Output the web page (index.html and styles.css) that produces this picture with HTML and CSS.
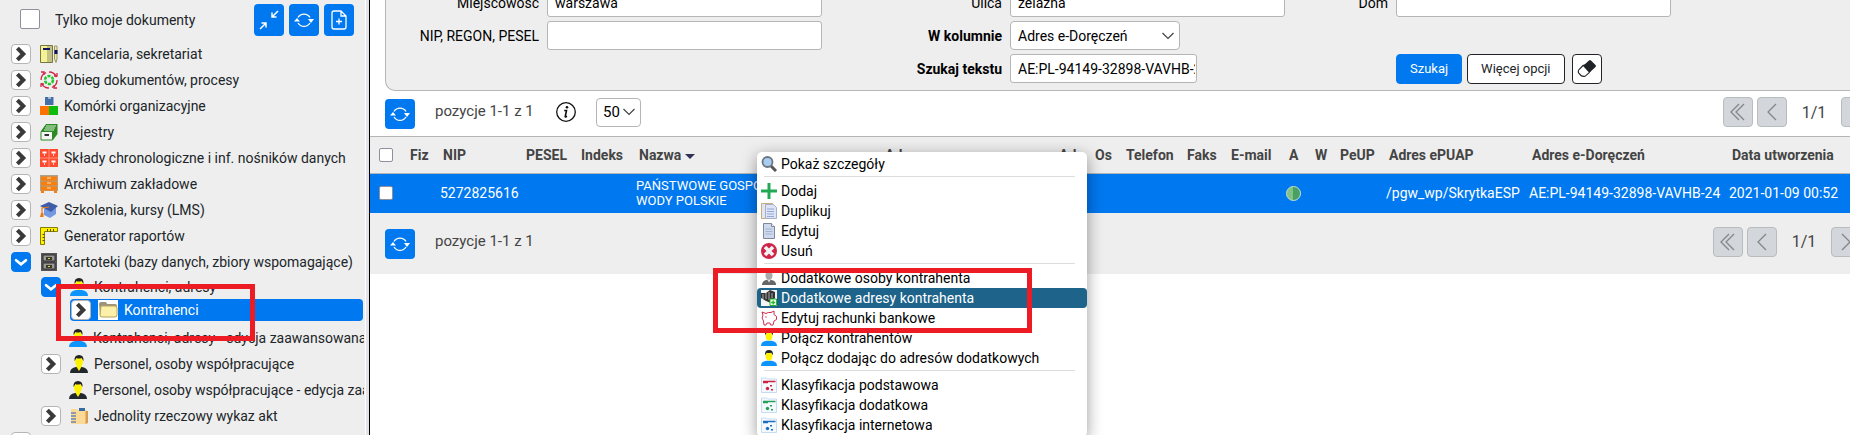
FILE: index.html
```
<!DOCTYPE html>
<html lang="pl">
<head>
  <meta charset="UTF-8">
  <title>Kontrahenci</title>
  <link rel="stylesheet" href="styles.css">
</head>
<body>
  <svg class="sprite" aria-hidden="true">
    <symbol id="i-right" viewBox="0 0 20 20"><path d="M6 3.500l6.500 6.500L6 16.500" fill="none" stroke="#3a3a3a" stroke-width="4.500"/></symbol>
    <symbol id="i-down" viewBox="0 0 20 20"><path d="M4.500 8l5.500 4.500 5.500-4.500" fill="none" stroke="#fff" stroke-width="3" stroke-linecap="round"/></symbol>
    <symbol id="i-refresh" viewBox="0 0 20 20">
      <path d="M4 7.500a7 7 0 0 1 12 0M17 10.500a7 7 0 0 0-.2-1M16 13a7 7 0 0 1-12 0M3 10.500a7 7 0 0 1 .2-1" fill="none" stroke="#fff" stroke-width="1.300"/>
      <path d="M14 9h6l-3 4zM0 11.500h6L3 8z" fill="#fff"/>
    </symbol>
    <symbol id="i-collapse" viewBox="0 0 20 20"><path d="M19 1l-6 6M13 2.500V7h4.500M1 19l6-6M2.500 13H7v4.500" fill="none" stroke="#fff" stroke-width="1.500"/></symbol>
    <symbol id="i-newdoc" viewBox="0 0 20 20">
      <path d="M12 1H5a2 2 0 0 0-2 2v14a2 2 0 0 0 2 2h10a2 2 0 0 0 2-2V6zM12 1v5h5M10 8.500v6M7 11.500h6" fill="none" stroke="#fff" stroke-width="1.300"/>
    </symbol>
    <symbol id="i-binder" viewBox="0 0 18 18">
      <path d="M.5.500h12v17H.5z" fill="#f5f296" stroke="#77773f"/><path d="M7 1h5v16H7z" fill="#c3c086"/><path d="M3 3h7v2H3z" fill="#101060"/>
      <path d="M14.500 1h2.500v13l-1 3.500-1.500-3.500z" fill="#eee9a0" stroke="#99966a"/><path d="M14.500 5h3v4h-3z" fill="#101060"/>
    </symbol>
    <symbol id="i-cycle" viewBox="0 0 18 18">
      <circle cx="9" cy="9" r="8" fill="none" stroke="#d42545" stroke-width="1.300" stroke-dasharray="9.500 3"/>
      <path d="M1 1h3v3M17 2v3h-3M17 17h-3v-3M1 16v-3h3" fill="none" stroke="#d42545" stroke-width="1.300"/>
      <circle cx="9" cy="9" r="4" fill="none" stroke="#21c82d" stroke-width="2.500" stroke-dasharray="3 1.200"/>
    </symbol>
    <symbol id="i-blocks" viewBox="0 0 18 18"><path d="M5 0h8.500v8H5z" fill="#4470a8"/><path d="M8 0h3v2H8z" fill="#9fb6d4"/><path d="M0 9h9v9H0z" fill="#ff7200"/><path d="M9 9h9v9H9z" fill="#0cbd0c"/></symbol>
    <symbol id="i-registers" viewBox="0 0 18 18">
      <path d="M1 8L6 1h11.500v10L13 17H1z" fill="#2c8a24"/><path d="M6 3h10M5 5h10M4 7h10" stroke="#d8efd4" stroke-width="1.100"/>
      <path d="M1 8.500h11.500v8.500H1z" fill="#f5f5f5" stroke="#2c8a24"/><path d="M4.500 11h4.500v2H4.500z" fill="#333"/>
    </symbol>
    <symbol id="i-stores" viewBox="0 0 18 18"><path d="M0 0h18v18H0z" fill="#ff4a2e"/><path d="M9 0v18M0 9h18" stroke="#ff8d7a"/><path d="M2.500 2.500h4v2h-4zM11.500 2.500h4v2h-4zM2.500 11.500h4v2h-4zM11.500 11.500h4v2h-4z" fill="#fff"/><path d="M4 5h1v2H4zM13 5h1v2h-1zM4 14h1v2H4zM13 14h1v2h-1z" fill="#ffd8d0"/></symbol>
    <symbol id="i-archive" viewBox="0 0 18 18"><path d="M0 0h18v16H0z" fill="#aaa18e"/><path d="M1 1.500h16v4H1zM1 6.500h16v4H1zM1 11.500h16v4H1zM1 16h3v2H1zM14 16h3v2h-3z" fill="#fb7d0a"/><path d="M7 3h4M7 8h4M7 13h4" stroke="#ffe0b8"/></symbol>
    <symbol id="i-course" viewBox="0 0 18 18"><path d="M4 8v6l6 3 6-4V7z" fill="#7399e2"/><path d="M0 5l9-4 9 4-7 6z" fill="#3e5da8"/><path d="M9 6L2 7v5" fill="none" stroke="#e5791a" stroke-width="1.200"/><path d="M1 12h2.500v4H0z" fill="#e5791a"/></symbol>
    <symbol id="i-ruler" viewBox="0 0 18 18"><path d="M.5.500h17v4h-13v13h-4z" fill="#fff200" stroke="#877e00"/><path d="M7.500 2v2.500M10.500 2v2.500M13.500 2v2.500M2.500 7.500h2M2.500 10.500h2M2.500 13.500h2" stroke="#55500a"/></symbol>
    <symbol id="i-cabinet" viewBox="0 0 18 18"><path d="M1 0h16v18H1z" fill="#555"/><path d="M3 2h12v6H3zM3 10h12v6H3z" fill="#999" stroke="#333"/><path d="M6 4h6v3H6zM6 12h6v3H6z" fill="#3b3b20"/><path d="M8 5h2v1H8zM8 13h2v1H8z" fill="#e0d070"/></symbol>
    <symbol id="i-person" viewBox="0 0 18 18"><path d="M0 18q0-5 6-6h6q6 1 6 6z" fill="#0d94ff"/><path d="M5 5q0 7 4 7t4-7l-2-2H7z" fill="#fff200"/><path d="M4.500 6Q4 0 9 0t4.500 6l-2-3q-3 1-5 0z" fill="#222"/></symbol>
    <symbol id="i-staff" viewBox="0 0 18 18"><path d="M0 18q0-5 6-6h6q6 1 6 6z" fill="#20282e"/><path d="M6 11l3 5 3-5z" fill="#fff200"/><path d="M5 5q0 7 4 7t4-7l-2-2H7z" fill="#fff200"/><path d="M4.500 6Q4 0 9 0t4.500 6l-2-3q-3 1-5 0z" fill="#222"/></symbol>
    <symbol id="i-user" viewBox="0 0 18 18"><path d="M1 17q0-5 6-6h4q6 1 6 6z" fill="#666"/><ellipse cx="9" cy="6" rx="4" ry="5.500" fill="#aaa"/><path d="M7 11l2 3 2-3z" fill="#ddd"/></symbol>
    <symbol id="i-folder" viewBox="0 0 20 20"><path d="M1 4q0-2 2-2h4q2 0 2 2h8q2 0 2 2v9q0 2-2 2H4q-2 0-2-2z" fill="#9d937c"/><path d="M3 6h14q2 0 2 2v7q0 2-2 2H4q-2 0-2-2z" fill="#fdf0a8" stroke="#b6a25a"/></symbol>
    <symbol id="i-index" viewBox="0 0 18 18"><path d="M1 2h6l1 1h9v14H1z" fill="#fbd997"/><path d="M15.500 4H18v12l-2.500 1z" fill="#d99c4e"/><path d="M9 1h6v3H9z" fill="#366aa5"/><path d="M1 6h5M1 9h5M1 12h5M1 15h5" stroke="#6c87ad" stroke-width="1.600"/></symbol>
    <symbol id="i-search" viewBox="0 0 16 16"><path d="M10 10l5 5" stroke="#555" stroke-width="3"/><circle cx="6.500" cy="6" r="5" fill="#a9cdf2" stroke="#6c7580" stroke-width="1.800"/></symbol>
    <symbol id="i-plus" viewBox="0 0 16 16"><path d="M8 0v16M0 8h16" stroke="#23a955" stroke-width="3"/></symbol>
    <symbol id="i-copy" viewBox="0 0 16 16"><path d="M.5.500h11v15H.5z" fill="#e3e6ee" stroke="#c9ab7c"/><path d="M4.500 1.500h8l3 3v11h-11z" fill="#dbe5f7" stroke="#a8afc4"/><path d="M6 6h7M6 8.500h7M6 11h7M6 13.500h7" stroke="#96a9d2"/></symbol>
    <symbol id="i-doc" viewBox="0 0 16 16"><path d="M2.500.500h8l3 3v12h-11z" fill="#cdd9ef" stroke="#7f8798"/><path d="M10.500.500v3h3" fill="#fff" stroke="#7f8798"/><path d="M4.500 6h7M4.500 8.500h7M4.500 11h7" stroke="#a5b3ce"/></symbol>
    <symbol id="i-delete" viewBox="0 0 16 16"><circle cx="8" cy="8" r="8" fill="#d0254a"/><path d="M4 4l8 8M12 4l-8 8" stroke="#f3f3f3" stroke-width="3.600"/></symbol>
    <symbol id="i-address" viewBox="0 0 16 16"><path d="M0 0h16v16H0z" fill="#f4f4f4"/><path d="M0 3h5l4-3 5 2v6l-4 5-5-2-5-3z" fill="#333"/><path d="M2 4v5M5 3v6M8 2v8M11 3v5" stroke="#aaa"/><path d="M9 9h6.500v6.500H9z" fill="#eaffea" stroke="#22b52b"/><path d="M12.200 10.500v4M10.200 12.500h4" stroke="#22b52b" stroke-width="1.300"/></symbol>
    <symbol id="i-piggy" viewBox="0 0 16 16"><path d="M1 2l4 1.500q2-1.500 5-1l3-1.500v3.500l2.500 2v3L13 11l-1 4H9.500L9 13H6l-1 2H3l-.5-4Q0 8 2 5z" fill="#fff" stroke="#cf2c50"/><circle cx="5" cy="7" r=".7" fill="#cf2c50"/></symbol>
    <symbol id="i-class" viewBox="0 0 16 16"><path d="M.5 1h5l1 1h9v13.500H.5z" fill="#f4f9fe" stroke="#c5dcf2"/><path d="M2 4.500h12.500" stroke="currentColor" stroke-width="1.500"/><path d="M2 5.500h5" stroke="currentColor" stroke-width="1.500"/><circle cx="6.500" cy="11.500" r="1.700" fill="currentColor"/><path d="M9 8h2v1.500H9zM10 12h2v1.500h-2z" fill="currentColor"/></symbol>
    <symbol id="i-info" viewBox="0 0 20 20"><circle cx="10" cy="10" r="9.300" fill="none" stroke="#111" stroke-width="1.300"/><circle cx="11" cy="5.300" r="1.300" fill="#111"/><path d="M8.200 8.500h2.300l-1.300 6q0 .8 1.800-.2" fill="none" stroke="#111" stroke-width="1.600"/></symbol>
    <symbol id="i-eraser" viewBox="0 0 20 20"><path d="M7 6l5-4.500q1-1 2 0l4.500 4.500q1 1 0 2L12 14z" fill="#1f2226"/><path d="M6.500 6L2 10.500q-1.500 2 0 4L4 16.500q1 1 4 .8l4.500-4" fill="#fff" stroke="#1f2226" stroke-width="1.100"/><path d="M6.500 6l6.500 7" stroke="#1f2226" stroke-width="2"/></symbol>
    <symbol id="i-first" viewBox="0 0 20 20"><path d="M11 2l-8 8 8 8M16 2l-8 8 8 8" fill="none" stroke="#83878b" stroke-width="1.300"/></symbol>
    <symbol id="i-prev" viewBox="0 0 20 20"><path d="M14 2l-8 8 8 8" fill="none" stroke="#83878b" stroke-width="1.300"/></symbol>
    <symbol id="i-next" viewBox="0 0 20 20"><path d="M6 2l8 8-8 8" fill="none" stroke="#83878b" stroke-width="1.300"/></symbol>
  </svg>

  <aside class="sidebar">
    <div class="sidebar-top">
      <input type="checkbox" id="onlyMine">
      <label for="onlyMine">Tylko moje dokumenty</label>
      <button class="btn-icon tall" aria-label="Zwiń"><svg><use href="#i-collapse"/></svg></button>
      <button class="btn-icon tall" aria-label="Odśwież"><svg><use href="#i-refresh"/></svg></button>
      <button class="btn-icon tall" aria-label="Nowy dokument"><svg><use href="#i-newdoc"/></svg></button>
    </div>
    <ul class="tree">
      <li><button class="toggle" aria-label="Rozwiń"><svg><use href="#i-right"/></svg></button><svg class="ico"><use href="#i-binder"/></svg><a href="#">Kancelaria, sekretariat</a></li>
      <li><button class="toggle" aria-label="Rozwiń"><svg><use href="#i-right"/></svg></button><svg class="ico"><use href="#i-cycle"/></svg><a href="#">Obieg dokumentów, procesy</a></li>
      <li><button class="toggle" aria-label="Rozwiń"><svg><use href="#i-right"/></svg></button><svg class="ico"><use href="#i-blocks"/></svg><a href="#">Komórki organizacyjne</a></li>
      <li><button class="toggle" aria-label="Rozwiń"><svg><use href="#i-right"/></svg></button><svg class="ico"><use href="#i-registers"/></svg><a href="#">Rejestry</a></li>
      <li><button class="toggle" aria-label="Rozwiń"><svg><use href="#i-right"/></svg></button><svg class="ico"><use href="#i-stores"/></svg><a href="#">Składy chronologiczne i inf. nośników danych</a></li>
      <li><button class="toggle" aria-label="Rozwiń"><svg><use href="#i-right"/></svg></button><svg class="ico"><use href="#i-archive"/></svg><a href="#">Archiwum zakładowe</a></li>
      <li><button class="toggle" aria-label="Rozwiń"><svg><use href="#i-right"/></svg></button><svg class="ico"><use href="#i-course"/></svg><a href="#">Szkolenia, kursy (LMS)</a></li>
      <li><button class="toggle" aria-label="Rozwiń"><svg><use href="#i-right"/></svg></button><svg class="ico"><use href="#i-ruler"/></svg><a href="#">Generator raportów</a></li>
      <li><button class="toggle open" aria-label="Zwiń"><svg><use href="#i-down"/></svg></button><svg class="ico"><use href="#i-cabinet"/></svg><a href="#">Kartoteki (bazy danych, zbiory wspomagające)</a></li>
      <li class="level2 short"><button class="toggle open" aria-label="Zwiń"><svg><use href="#i-down"/></svg></button><svg class="ico"><use href="#i-person"/></svg><a href="#">Kontrahenci, adresy</a></li>
      <li class="selected"><button class="toggle" aria-label="Rozwiń"><svg><use href="#i-right"/></svg></button><svg class="ico"><use href="#i-folder"/></svg><a href="#">Kontrahenci</a></li>
      <li class="level2 leaf"><svg class="ico"><use href="#i-person"/></svg><a href="#">Kontrahenci, adresy - edycja zaawansowana</a></li>
      <li class="level2"><button class="toggle" aria-label="Rozwiń"><svg><use href="#i-right"/></svg></button><svg class="ico"><use href="#i-staff"/></svg><a href="#">Personel, osoby współpracujące</a></li>
      <li class="level2 leaf"><svg class="ico"><use href="#i-staff"/></svg><a href="#">Personel, osoby współpracujące - edycja zaawansowana</a></li>
      <li class="level2"><button class="toggle" aria-label="Rozwiń"><svg><use href="#i-right"/></svg></button><svg class="ico"><use href="#i-index"/></svg><a href="#">Jednolity rzeczowy wykaz akt</a></li>
      <li><button class="toggle" aria-label="Rozwiń"><svg><use href="#i-right"/></svg></button></li>
    </ul>
  </aside>

  <main class="content">
    <form class="search">
      <label for="city">Miejscowość</label>
      <input type="text" id="city" value="warszawa">
      <label for="street">Ulica</label>
      <input type="text" id="street" value="żelazna">
      <label for="house">Dom</label>
      <input type="text" id="house">

      <label for="nip">NIP, REGON, PESEL</label>
      <input type="text" id="nip">
      <label class="bold" for="column">W kolumnie</label>
      <select id="column" class="column-select"><option>Adres e-Doręczeń</option></select>

      <label class="bold text-label" for="text">Szukaj tekstu</label>
      <input type="text" id="text" class="text-input" value="AE:PL-94149-32898-VAVHB-24">
      <div class="actions">
        <button type="button" class="btn primary">Szukaj</button>
        <button type="button" class="btn">Więcej opcji</button>
        <button type="button" class="btn square" aria-label="Wyczyść"><svg><use href="#i-eraser"/></svg></button>
      </div>
    </form>

    <div class="list-bar">
      <button class="btn-icon" aria-label="Odśwież"><svg><use href="#i-refresh"/></svg></button>
      <span class="count">pozycje 1-1 z 1</span>
      <svg class="info"><use href="#i-info"/></svg>
      <select class="page-size" aria-label="Liczba pozycji"><option>50</option></select>
      <div class="pager">
        <button aria-label="Pierwsza"><svg><use href="#i-first"/></svg></button>
        <button aria-label="Poprzednia"><svg><use href="#i-prev"/></svg></button>
        <span>1/1</span>
        <button aria-label="Następna"><svg><use href="#i-next"/></svg></button>
      </div>
    </div>

    <table class="grid">
      <colgroup>
        <col class="c-check"><col class="c-fiz"><col class="c-nip"><col class="c-pesel"><col class="c-index"><col class="c-name">
        <col class="c-address"><col class="c-ad"><col class="c-os"><col class="c-phone"><col class="c-fax"><col class="c-mail">
        <col class="c-a"><col class="c-w"><col class="c-peup"><col class="c-epuap"><col class="c-edor"><col class="c-date">
      </colgroup>
      <thead>
        <tr>
          <th><input type="checkbox" aria-label="Zaznacz wszystkie"></th>
          <th>Fiz</th><th>NIP</th><th>PESEL</th><th>Indeks</th><th>Nazwa <span class="sort"></span></th>
          <th>Adres</th><th>Ad</th><th>Os</th><th>Telefon</th><th>Faks</th><th>E-mail</th>
          <th>A</th><th>W</th><th>PeUP</th><th>Adres ePUAP</th><th>Adres e-Doręczeń</th><th>Data utworzenia</th>
        </tr>
      </thead>
      <tbody>
        <tr>
          <td><input type="checkbox" aria-label="Zaznacz wiersz"></td>
          <td></td><td>5272825616</td><td></td><td></td><td class="name">PAŃSTWOWE GOSPODARSTWO<br>WODY POLSKIE</td>
          <td></td><td></td><td></td><td></td><td></td><td></td>
          <td><span class="status"></span></td><td></td><td></td><td>/pgw_wp/SkrytkaESP</td><td>AE:PL-94149-32898-VAVHB-24</td><td>2021-01-09 00:52</td>
        </tr>
      </tbody>
    </table>

    <div class="list-bar bottom">
      <button class="btn-icon" aria-label="Odśwież"><svg><use href="#i-refresh"/></svg></button>
      <span class="count">pozycje 1-1 z 1</span>
      <div class="pager">
        <button aria-label="Pierwsza"><svg><use href="#i-first"/></svg></button>
        <button aria-label="Poprzednia"><svg><use href="#i-prev"/></svg></button>
        <span>1/1</span>
        <button aria-label="Następna"><svg><use href="#i-next"/></svg></button>
      </div>
    </div>
  </main>

  <div class="context-menu" role="menu">
    <button role="menuitem"><svg><use href="#i-search"/></svg>Pokaż szczegóły</button>
    <hr>
    <button role="menuitem"><svg><use href="#i-plus"/></svg>Dodaj</button>
    <button role="menuitem"><svg><use href="#i-copy"/></svg>Duplikuj</button>
    <button role="menuitem"><svg><use href="#i-doc"/></svg>Edytuj</button>
    <button role="menuitem"><svg><use href="#i-delete"/></svg>Usuń</button>
    <hr>
    <button role="menuitem"><svg><use href="#i-user"/></svg>Dodatkowe osoby kontrahenta</button>
    <button role="menuitem" class="active"><svg><use href="#i-address"/></svg>Dodatkowe adresy kontrahenta</button>
    <button role="menuitem"><svg><use href="#i-piggy"/></svg>Edytuj rachunki bankowe</button>
    <button role="menuitem"><svg><use href="#i-person"/></svg>Połącz kontrahentów</button>
    <button role="menuitem"><svg><use href="#i-person"/></svg>Połącz dodając do adresów dodatkowych</button>
    <hr>
    <button role="menuitem"><svg class="red"><use href="#i-class"/></svg>Klasyfikacja podstawowa</button>
    <button role="menuitem"><svg class="green"><use href="#i-class"/></svg>Klasyfikacja dodatkowa</button>
    <button role="menuitem"><svg class="blue"><use href="#i-class"/></svg>Klasyfikacja internetowa</button>
  </div>

  <div class="marker marker-tree"></div>
  <div class="marker marker-menu"></div>
</body>
</html>
```
FILE: styles.css
```
:root {
  --primary: #0078f0;
  --panel: #eee;
  --line: #b5b5b5;
  --text: #212529;
}

* {
  box-sizing: border-box;
}

body {
  margin: 0;
  height: 100vh;
  display: flex;
  overflow: hidden;
  position: relative;
  background: white;
  color: var(--text);
  font-family: Roboto, "Noto Sans", sans-serif;
  font-size: 14px;
}

button,
input,
select {
  font-family: inherit;
  font-size: 14px;
  margin: 0;
}

button {
  padding: 0;
  cursor: pointer;
}

a {
  color: inherit;
  text-decoration: none;
}

.sprite {
  position: absolute;
  width: 0;
  height: 0;
}

input[type="checkbox"] {
  appearance: none;
  width: 14px;
  height: 14px;
  background: white;
  border: 1px solid #8f8f9d;
  border-radius: 2px;
  display: block;
}

/* sidebar */
.sidebar {
  flex: 0 0 370px;
  padding-right: 5px;
  background: var(--panel);
  border-right: 1px solid black;
  box-shadow: inset -3px 0 #e2e2e8, inset -4px 0 white;
  overflow: hidden;
}

.sidebar-top {
  display: flex;
  align-items: flex-start;
  gap: 5px;
  height: 41px;
  padding: 4px 10px 0 20px;
}

.sidebar-top input[type="checkbox"] {
  width: 20px;
  height: 20px;
  margin-top: 5px;
}

.sidebar-top label {
  flex: 1;
  margin-left: 10px;
  line-height: 32px;
}

.btn-icon {
  width: 30px;
  height: 30px;
  display: flex;
  align-items: center;
  justify-content: center;
  background: var(--primary);
  border: none;
  border-radius: 4px;
}

.btn-icon.tall {
  height: 32px;
}

.btn-icon svg {
  width: 20px;
  height: 20px;
}

.tree {
  list-style: none;
  margin: 0;
  padding: 0;
}

.tree li {
  display: flex;
  align-items: center;
  height: 26px;
  padding-left: 11px;
  white-space: nowrap;
  overflow: hidden;
}

.tree .level2 {
  padding-left: 41px;
}

.tree .leaf {
  padding-left: 69px;
}

.tree .leaf .ico {
  margin-left: 0;
}

.tree .short {
  height: 24px;
}

.tree .selected {
  height: 22px;
  margin: 0 1px 4px 70px;
  padding-left: 1px;
  background: var(--primary);
  border-radius: 4px;
  color: white;
}

.toggle {
  flex: none;
  width: 20px;
  height: 20px;
  background: white;
  border: 1px solid #b5b5b5;
  border-radius: 4px;
}

.toggle svg {
  display: block;
  width: 18px;
  height: 18px;
}

.toggle.open {
  background: var(--primary);
  border-color: var(--primary);
}

.ico {
  flex: none;
  width: 18px;
  height: 18px;
  margin: 0 6px 0 9px;
}

.selected .ico {
  width: 20px;
  height: 20px;
  margin-left: 7px;
  background: white;
}

/* search form */
.content {
  flex: 1;
  min-width: 0;
  overflow: hidden;
}

.search {
  display: grid;
  grid-template-columns: 153px 275px 172px 275px 95px 275px;
  grid-auto-rows: 29px;
  gap: 4px 8px;
  align-items: center;
  margin: -12px 0 0 15px;
  padding-bottom: 7px;
  background: var(--panel);
  border: 1px solid var(--line);
  border-width: 0 0 1px 1px;
  border-radius: 0 0 0 10px;
  color: black;
}

.search label {
  text-align: right;
}

.bold {
  font-weight: bold;
}

.search input,
.search select {
  width: 100%;
  height: 29px;
  padding: 0 7px;
  background: white;
  border: 1px solid var(--line);
  border-radius: 3px;
  color: black;
}

.search .column-select,
.page-size {
  appearance: none;
  background: white url("data:image/svg+xml,%3Csvg xmlns='http://www.w3.org/2000/svg' width='12' height='8'%3E%3Cpath d='M.5 1l5.500 5.500L11.500 1' fill='none' stroke='%23444' stroke-width='1.200'/%3E%3C/svg%3E") no-repeat right 5px center;
  border: 1px solid var(--line);
  border-radius: 4px;
}

.search .column-select {
  width: 170px;
}

.search .text-label {
  grid-column: 3;
}

.search .text-input {
  width: 187px;
  padding-right: 1px;
}

.actions {
  grid-column: 6;
  display: flex;
  gap: 5px;
}

.btn {
  height: 30px;
  padding: 0 13px;
  background: white;
  border: 1px solid #212529;
  border-radius: 4px;
  color: #212529;
  font-size: 13px;
}

.btn.primary {
  background: var(--primary);
  border-color: var(--primary);
  color: white;
}

.btn.square {
  width: 30px;
  margin-left: 2px;
  padding: 4px;
}

.btn.square svg {
  display: block;
  width: 20px;
  height: 20px;
}

/* list */
.list-bar {
  display: flex;
  align-items: center;
  height: 45px;
  margin-right: -56px;
  padding: 0 0 3px 15px;
  color: #444;
}

.list-bar .btn-icon {
  margin-top: 4px;
}

.count {
  width: 98px;
  margin: 0 23px 2px 20px;
  font-size: 15px;
  white-space: nowrap;
}

.info {
  width: 20px;
  height: 20px;
  margin-right: 20px;
}

.page-size {
  width: 45px;
  height: 29px;
  padding-left: 6px;
  font-size: 15px;
}

.pager {
  display: flex;
  align-items: center;
  gap: 4px;
  margin-left: auto;
  padding-right: 35px;
  font-size: 16px;
}

.pager span {
  width: 46px;
  text-align: center;
}

.pager button {
  width: 30px;
  height: 30px;
  padding: 4px;
  background: #d3d6da;
  border: 1px solid #b9bcbf;
  border-radius: 4px;
}

.pager svg {
  display: block;
  width: 20px;
  height: 20px;
}

.list-bar.bottom {
  height: 61px;
  margin-right: 0;
  background: var(--panel);
}

.bottom .pager {
  margin-right: -46px;
}

.grid {
  width: 100%;
  table-layout: fixed;
  border-collapse: collapse;
  background: var(--panel);
}

.grid th,
.grid td {
  text-align: left;
  white-space: nowrap;
}

.grid th {
  height: 37px;
  padding: 0 0 0 7px;
  border-top: 1px solid var(--line);
  border-bottom: 1px solid var(--line);
  color: #444;
}

.grid td {
  height: 39px;
  padding: 0 0 0 4px;
  background: var(--primary);
  color: white;
  line-height: 15px;
}

.grid .name {
  font-size: 13px;
}

.grid th:first-child,
.grid td:first-child {
  padding-left: 9px;
}

.c-check { width: 33px; }
.c-fiz { width: 33px; }
.c-nip { width: 83px; }
.c-pesel { width: 55px; }
.c-index { width: 58px; }
.c-name { width: 246px; }
.c-address { width: 174px; }
.c-ad { width: 36px; }
.c-os { width: 31px; }
.c-phone { width: 61px; }
.c-fax { width: 44px; }
.c-mail { width: 58px; }
.c-a { width: 26px; }
.c-w { width: 25px; }
.c-peup { width: 49px; }
.c-epuap { width: 143px; }
.c-edor { width: 200px; }

.sort {
  display: inline-block;
  border: 5px solid transparent;
  border-top-color: #32305a;
  border-bottom: none;
  vertical-align: middle;
}

.status {
  display: block;
  width: 15px;
  height: 15px;
  background: linear-gradient(90deg, #84c184 50%, #48a065 50%);
  border: 1px solid #c3e0cd;
  border-radius: 50%;
}

/* context menu */
.context-menu {
  position: absolute;
  left: 757px;
  top: 152px;
  width: 330px;
  padding: 2px 0;
  background: white;
  border-radius: 5px;
  box-shadow: 0 4px 16px rgba(0, 0, 0, 0.4);
}

.context-menu button {
  display: flex;
  align-items: center;
  gap: 4px;
  width: 100%;
  height: 20px;
  padding: 0 4px;
  background: none;
  border: none;
  border-radius: 4px;
  color: black;
}

.context-menu svg {
  flex: none;
  width: 16px;
  height: 16px;
}

.context-menu .active {
  background: #1d638a;
  color: white;
}

.context-menu hr {
  margin: 2px 12px 4px 7px;
  border: none;
  border-top: 1px solid #ddd;
}

.red { color: #cf2040; }
.green { color: #25a05a; }
.blue { color: #1b6fc0; }

/* highlight frames */
.marker {
  position: absolute;
  border: 5px solid #ed1c24;
}

.marker-tree {
  left: 56px;
  top: 284px;
  width: 199px;
  height: 57px;
}

.marker-menu {
  left: 713px;
  top: 268px;
  width: 319px;
  height: 65px;
}
```
